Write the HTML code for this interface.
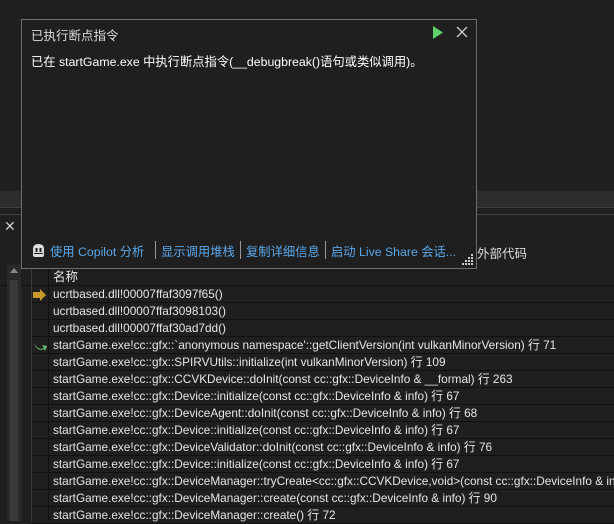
<!DOCTYPE html>
<html><head><meta charset="utf-8"><style>
*{margin:0;padding:0;box-sizing:border-box}
body{width:614px;height:521px;background:#1f1f1f;overflow:hidden;position:relative;font-family:"Liberation Sans","Noto Sans CJK SC",sans-serif;color:#e6e6e6;font-size:12px}
.abs{position:absolute}
.row{position:absolute;left:48px;right:0;height:17px;border-bottom:1px solid #111;line-height:17px;padding-left:5px;white-space:nowrap;overflow:hidden;font-size:11.8px}
.g{position:absolute;left:32px;width:16px;height:17px;border-bottom:1px solid #111}
.lk{position:absolute;top:222px;font-size:12.3px;color:#5aa7ea;white-space:nowrap}
.sep{position:absolute;top:221px;width:1px;height:18px;background:#999}
</style></head><body>
<div class="abs" style="left:0;top:191px;width:614px;height:16px;background:#2d2d2d"></div>
<div class="abs" style="left:0;top:207px;width:614px;height:1px;background:#3e3e3e"></div>
<div class="abs" style="left:0;top:214px;width:614px;height:1px;background:#3e3e3e"></div>
<div class="abs" style="left:4px;top:218px;font-size:14px;color:#ccc">✕</div>
<div class="abs" style="left:477px;top:243px;font-size:12.5px;color:#ddd">外部代码</div>
<div class="abs" style="left:0;top:285px;width:614px;height:1px;background:#111"></div>
<div class="abs" style="left:7px;top:265px;width:14px;height:256px;background:#2a2a2a"></div>
<div class="abs" style="left:10px;top:280px;width:8px;height:241px;background:#3a3a3a"></div>
<div class="abs" style="left:10px;top:268px;width:0;height:0;border-left:4px solid transparent;border-right:4px solid transparent;border-bottom:5px solid #888"></div>
<div class="abs" style="left:31px;top:265px;width:1px;height:256px;background:#3a3a3a"></div>
<div class="abs" style="left:48px;top:265px;width:1px;height:256px;background:#111"></div>
<div class="abs" style="left:53px;top:266px;font-size:12.5px">名称</div>
<div id="rows"></div>
<script>
var r=["ucrtbased.dll!00007ffaf3097f65()","ucrtbased.dll!00007ffaf3098103()","ucrtbased.dll!00007ffaf30ad7dd()","startGame.exe!cc::gfx::`anonymous namespace'::getClientVersion(int vulkanMinorVersion) 行 71","startGame.exe!cc::gfx::SPIRVUtils::initialize(int vulkanMinorVersion) 行 109","startGame.exe!cc::gfx::CCVKDevice::doInit(const cc::gfx::DeviceInfo &amp; __formal) 行 263","startGame.exe!cc::gfx::Device::initialize(const cc::gfx::DeviceInfo &amp; info) 行 67","startGame.exe!cc::gfx::DeviceAgent::doInit(const cc::gfx::DeviceInfo &amp; info) 行 68","startGame.exe!cc::gfx::Device::initialize(const cc::gfx::DeviceInfo &amp; info) 行 67","startGame.exe!cc::gfx::DeviceValidator::doInit(const cc::gfx::DeviceInfo &amp; info) 行 76","startGame.exe!cc::gfx::Device::initialize(const cc::gfx::DeviceInfo &amp; info) 行 67","startGame.exe!cc::gfx::DeviceManager::tryCreate&lt;cc::gfx::CCVKDevice,void&gt;(const cc::gfx::DeviceInfo &amp; info","startGame.exe!cc::gfx::DeviceManager::create(const cc::gfx::DeviceInfo &amp; info) 行 90","startGame.exe!cc::gfx::DeviceManager::create() 行 72"];
var h="";for(var i=0;i<r.length;i++){var t=286+i*17;h+='<div class="g" style="top:'+t+'px"></div><div class="row" style="top:'+t+'px">'+r[i]+'</div>';}
document.getElementById('rows').innerHTML=h;
</script>
<svg class="abs" style="left:32px;top:289px" width="16" height="12"><path d="M1 3h7V0l6 6-6 6V9H1z" fill="#c89a2a"/></svg>
<svg class="abs" style="left:33px;top:340px" width="14" height="12"><path d="M1 3 Q5 11 11 8 L9 5 14 6 12 11 11 9 Q4 12 1 3z" fill="#6cc070"/></svg>
<div class="abs" style="left:21px;top:19px;width:456px;height:250px;background:#1f1f1f;border:1px solid #6e6e6e">
 <div class="abs" style="left:9px;top:5px;font-size:12.5px;color:#ddd">已执行断点指令</div>
 <svg class="abs" style="left:410px;top:6px" width="12" height="13"><path d="M1 0L11 6.5 1 13z" fill="#5fcf6a"/></svg>
 <svg class="abs" style="left:434px;top:6px" width="12" height="12"><path d="M1 1L11 11M11 1L1 11" stroke="#ccc" stroke-width="1.3"/></svg>
 <div class="abs" style="left:9px;top:32px;font-size:12.3px;color:#fff;white-space:nowrap">已在 startGame.exe 中执行断点指令(__debugbreak()语句或类似调用)。</div>
 <svg class="abs" style="left:9px;top:223px" width="15" height="15"><path d="M2 6 Q2 1 7.5 1 Q13 1 13 6 L13 12 Q13 14 11 14 L4 14 Q2 14 2 12z" fill="#ddd"/><rect x="4.5" y="5" width="2" height="4" fill="#1f1f1f"/><rect x="8.5" y="5" width="2" height="4" fill="#1f1f1f"/><rect x="3" y="10" width="9" height="1" fill="#1f1f1f"/></svg>
 <div class="lk" style="left:28px">使用 Copilot 分析</div>
 <div class="sep" style="left:133px"></div>
 <div class="lk" style="left:139px">显示调用堆栈</div>
 <div class="sep" style="left:218px"></div>
 <div class="lk" style="left:224px">复制详细信息</div>
 <div class="sep" style="left:303px"></div>
 <div class="lk" style="left:309px">启动 Live Share 会话...</div>
 <svg class="abs" style="left:440px;top:234px" width="12" height="12"><g fill="#ccc"><rect x="9" y="0" width="2" height="2"/><rect x="6" y="3" width="2" height="2"/><rect x="9" y="3" width="2" height="2"/><rect x="3" y="6" width="2" height="2"/><rect x="6" y="6" width="2" height="2"/><rect x="9" y="6" width="2" height="2"/><rect x="0" y="9" width="2" height="2"/><rect x="3" y="9" width="2" height="2"/><rect x="6" y="9" width="2" height="2"/><rect x="9" y="9" width="2" height="2"/></g></svg>
</div>
</body></html>
